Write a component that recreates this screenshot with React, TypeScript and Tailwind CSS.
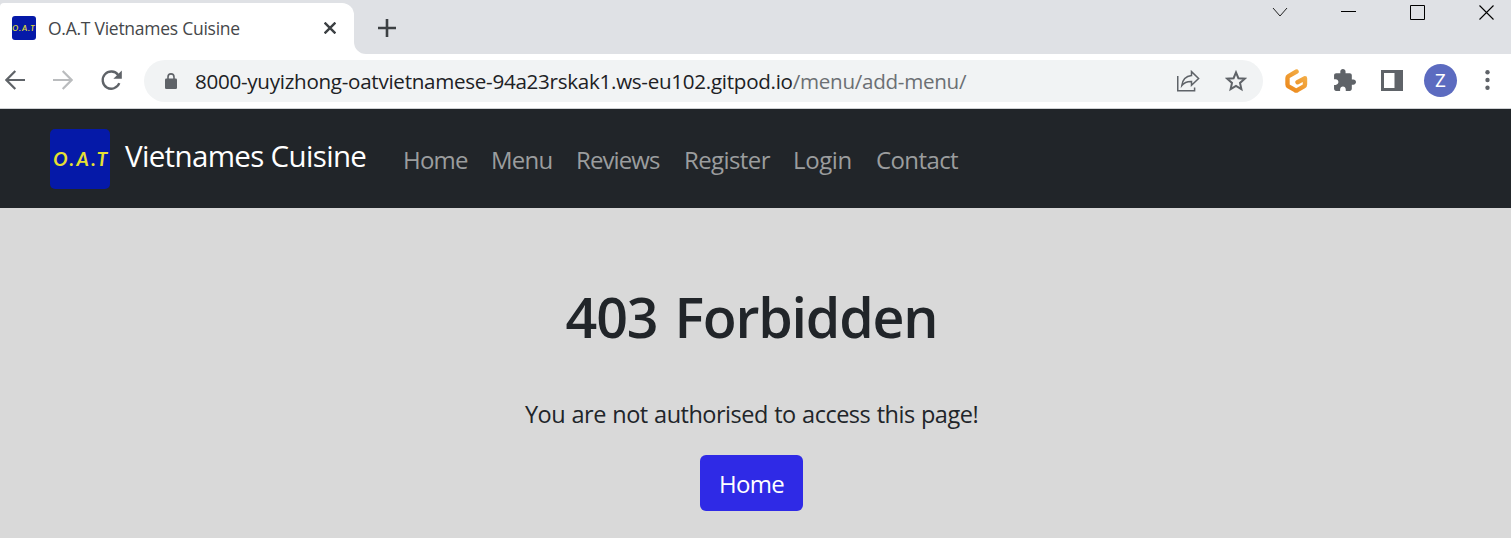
import React from "react";

const links = [
  { label: "Home", box: "w-[88px]", tracking: "tracking-[-0.8px]" },
  { label: "Menu", box: "w-[85px]", tracking: "tracking-[-0.8px]" },
  { label: "Reviews", box: "w-[108px]", tracking: "tracking-[-0.9px]" },
  { label: "Register", box: "w-[109px]", tracking: "tracking-[-0.6px]" },
  { label: "Login", box: "w-[83px]", tracking: "tracking-[-0.4px]" },
  { label: "Contact", box: "w-[90px]", tracking: "tracking-[-0.6px]" },
];

function TabStrip() {
  return (
    <div className="flex h-[54px] bg-[#dfe1e5] pt-[3px]">
      <div className="flex h-[51px] w-[354px] shrink-0 items-center rounded-tr-[12px] rounded-tl-[4px] bg-white pb-[2px] pl-3">
        <div className="flex size-6 shrink-0 items-center justify-center overflow-hidden rounded-[3px] bg-[#0519a8] font-['Lato',sans-serif] text-[8px] leading-none font-bold tracking-[0.9px] text-[#d8d43c] italic">
          O.A.T
        </div>
        <span className="ml-3 w-[276px] text-[17.5px] leading-6 tracking-[-0.26px] whitespace-nowrap text-[#45474a]">
          O.A.T Vietnames Cuisine
        </span>
        <svg className="mt-px mr-[18px] size-3 shrink-0" viewBox="0 0 12 12" stroke="#3c4043" strokeWidth="2.4" fill="none">
          <path d="M0.6 0.6 11.4 11.4M11.4 0.6 0.6 11.4" />
        </svg>
      </div>
      <svg className="size-3 shrink-0 self-end" viewBox="0 0 12 12" fill="#fff">
        <path d="M0 0A12 12 0 0 0 12 12H0Z" />
      </svg>
      <svg className="mt-4 ml-3 size-[18px] shrink-0" viewBox="0 0 18 18" stroke="#3c4043" strokeWidth="2.6" fill="none">
        <path d="M9 0V18M0 9H18" />
      </svg>
      <div className="ml-auto flex gap-[53px] pr-4">
        <svg className="mt-1 size-4" viewBox="0 0 16 16" stroke="#222" fill="none">
          <path d="M1 1 8 9 15 1" />
        </svg>
        <svg className="size-4" viewBox="0 0 16 16" fill="#000">
          <path d="M0 8H15V9H0Z" />
        </svg>
        <svg className="mt-[2px] size-4" viewBox="0 0 16 16" stroke="#000" fill="none">
          <path d="M.5.5H14.5V14.5H.5Z" />
        </svg>
        <svg className="mt-[2px] size-4" viewBox="0 0 16 16" stroke="#000" strokeWidth="1.1" fill="none">
          <path d="M.5.5 14.5 14.5M14.5.5.5 14.5" />
        </svg>
      </div>
    </div>
  );
}

function Toolbar() {
  return (
    <div className="flex h-[55px] items-center border-b border-[#cfd1d4] bg-white">
      <svg className="-mt-[2px] ml-[5px] size-5 shrink-0" viewBox="0 0 20 20" stroke="#5f6368" strokeWidth="2.2" fill="none">
        <path d="M20 10H1.7M10.3 1 1.4 10 10.3 19" />
      </svg>
      <svg className="-mt-[2px] ml-7 size-5 shrink-0" viewBox="0 0 20 20" stroke="#babcbe" strokeWidth="2.2" fill="none">
        <path d="M0 10H18.3M9.7 1 18.6 10 9.7 19" />
      </svg>
      <svg className="-mt-px ml-7 size-[21px] shrink-0" viewBox="0 0 21 21" fill="none">
        <path d="M18.3 13.2A8.6 8.6 0 1 1 17.2 5" stroke="#5f6368" strokeWidth="2.3" />
        <path d="M20.8 0.5V8.7H12.4Z" fill="#5f6368" />
      </svg>
      <div className="ml-[22px] flex h-[42px] w-[1119px] shrink-0 items-center rounded-full bg-[#f1f3f4]">
        <svg className="ml-[21px] h-4 w-3 shrink-0" viewBox="0 0 12 16">
          <path d="M3 6V3.9a3 3 0 0 1 6 0V6" fill="none" stroke="#5f6368" strokeWidth="1.6" />
          <rect y="5.5" width="12" height="10.5" rx="1.3" fill="#5f6368" />
        </svg>
        <span className="ml-[18px] w-[981px] shrink-0 text-[20.6px] leading-7 tracking-[-0.28px] whitespace-nowrap text-[#202124]">
          8000-yuyizhong-oatvietnamese-94a23rskak1.ws-eu102.gitpod.io
          <span className="text-[#6b6f73]">/menu/add-menu/</span>
        </span>
        <svg className="h-[22px] w-6 shrink-0" viewBox="0 0 24 22" fill="none" stroke="#5f6368" strokeWidth="1.5">
          <path d="M1.75 6V20.8H18.6V17.5" />
          <path d="M15.5 1.6 22.6 8.5 15.5 15.3V11.4C11 11.3 8 12.5 5.8 15.5 6.5 10 9.5 6.2 15.5 5.5Z" />
        </svg>
        <svg className="ml-[25px] size-[22px] shrink-0" viewBox="0 0 22 22" fill="none" stroke="#5f6368" strokeWidth="2">
          <path d="M11 2.4 13.4 8.2 19.8 8.7 15 12.9 16.4 19.1 11 15.8 5.6 19.1 7 12.9 2.2 8.7 8.6 8.2Z" />
        </svg>
      </div>
      <svg className="ml-[22px] h-6 w-[23px] shrink-0" viewBox="0 0 23 24" fill="none">
        <defs>
          <linearGradient id="gitpod" x1="1" y1="0" x2="0.2" y2="1">
            <stop stopColor="#f4b24c" />
            <stop offset="1" stopColor="#ec8b1f" />
          </linearGradient>
        </defs>
        <path
          d="M11.6 2.5 3.6 7.1Q2.500 7.800 2.500 9V15.600Q2.500 16.800 3.500 17.400L10.100 21.200Q11.200 21.800 12.300 21.200L18.900 17.400Q20 16.800 20 15.600V9.200L12.500 13.300"
          stroke="url(#gitpod)"
          strokeWidth="4.400"
          strokeLinecap="round"
          strokeLinejoin="round"
        />
      </svg>
      <svg className="-mt-px ml-[25px] size-[23px] shrink-0" viewBox="1 1 22 22" fill="#5f6368">
        <path d="M20.5 11H19V7c0-1.1-.9-2-2-2h-4V3.5C13 2.12 11.88 1 10.5 1S8 2.12 8 3.5V5H4c-1.1 0-1.99.9-1.99 2v3.8H3.5c1.49 0 2.7 1.21 2.7 2.7s-1.21 2.7-2.7 2.7H2V20c0 1.1.9 2 2 2h3.800v-1.5c0-1.49 1.21-2.7 2.7-2.7 1.49 0 2.7 1.21 2.7 2.7V22H17c1.100 0 2-.9 2-2v-4h1.500c1.380 0 2.500-1.120 2.500-2.500S21.880 11 20.500 11z" />
      </svg>
      <svg className="-mt-px ml-[25px] h-[21px] w-[22px] shrink-0" viewBox="0 0 22 21">
        <path d="M0 0H22V21H0ZM3 3V18H13.500V3Z" fill="#5f6368" fillRule="evenodd" />
      </svg>
      <div className="-mt-[2px] ml-[21px] flex size-[33px] shrink-0 items-center justify-center rounded-full bg-[#5c6bc0] font-['Roboto',sans-serif] text-[18px] text-white">
        Z
      </div>
      <svg className="-mt-[2px] ml-[28px] h-5 w-[5px] shrink-0" viewBox="0 0 5 20" fill="#5f6368">
        <circle cx="2.500" cy="2.300" r="2.200" />
        <circle cx="2.500" cy="10" r="2.200" />
        <circle cx="2.500" cy="17.700" r="2.200" />
      </svg>
    </div>
  );
}

function Navbar() {
  return (
    <nav className="flex h-[99px] items-center bg-[#212529] pl-[50px]">
      <div className="flex size-[60px] shrink-0 items-center justify-center overflow-hidden rounded-[5px] bg-[#0519a8] pl-[3px] font-['Lato',sans-serif] text-[19px] leading-none font-bold tracking-[2.4px] text-[#e6e032] italic">
        O.A.T
      </div>
      <a className="ml-[15px] w-[278px] shrink-0 pb-[6px] text-[29.5px] leading-[45px] tracking-[-0.66px] whitespace-nowrap text-white">
        Vietnames Cuisine
      </a>
      <div className="flex pt-[3px] text-[24px] leading-9 text-[#9b9d9e]">
        {links.map((l) => (
          <a key={l.label} className={`${l.box} ${l.tracking} shrink-0 whitespace-nowrap`}>
            {l.label}
          </a>
        ))}
      </div>
    </nav>
  );
}

export default function App() {
  return (
    <div className="flex h-[538px] w-[1511px] flex-col overflow-hidden bg-[#d9d9d9] font-['Open_Sans',sans-serif]">
      <TabStrip />
      <Toolbar />
      <Navbar />
      <main className="flex flex-col items-center pr-2 text-[#212529]">
        <h1 className="mt-[75px] text-[55.5px] leading-[68px] font-semibold tracking-[-1.2px] [word-spacing:4px] whitespace-nowrap">
          403 Forbidden
        </h1>
        <p className="mt-[45px] text-[23.5px] leading-9 tracking-[-0.5px] [word-spacing:0.8px] whitespace-nowrap">
          You are not authorised to access this page!
        </p>
        <button className="mt-[23px] flex h-14 w-[103px] items-center justify-center rounded-[6px] bg-[#2f2ae6] pt-[2px] text-[24px] leading-9 tracking-[-0.7px] text-white">
          Home
        </button>
      </main>
    </div>
  );
}
